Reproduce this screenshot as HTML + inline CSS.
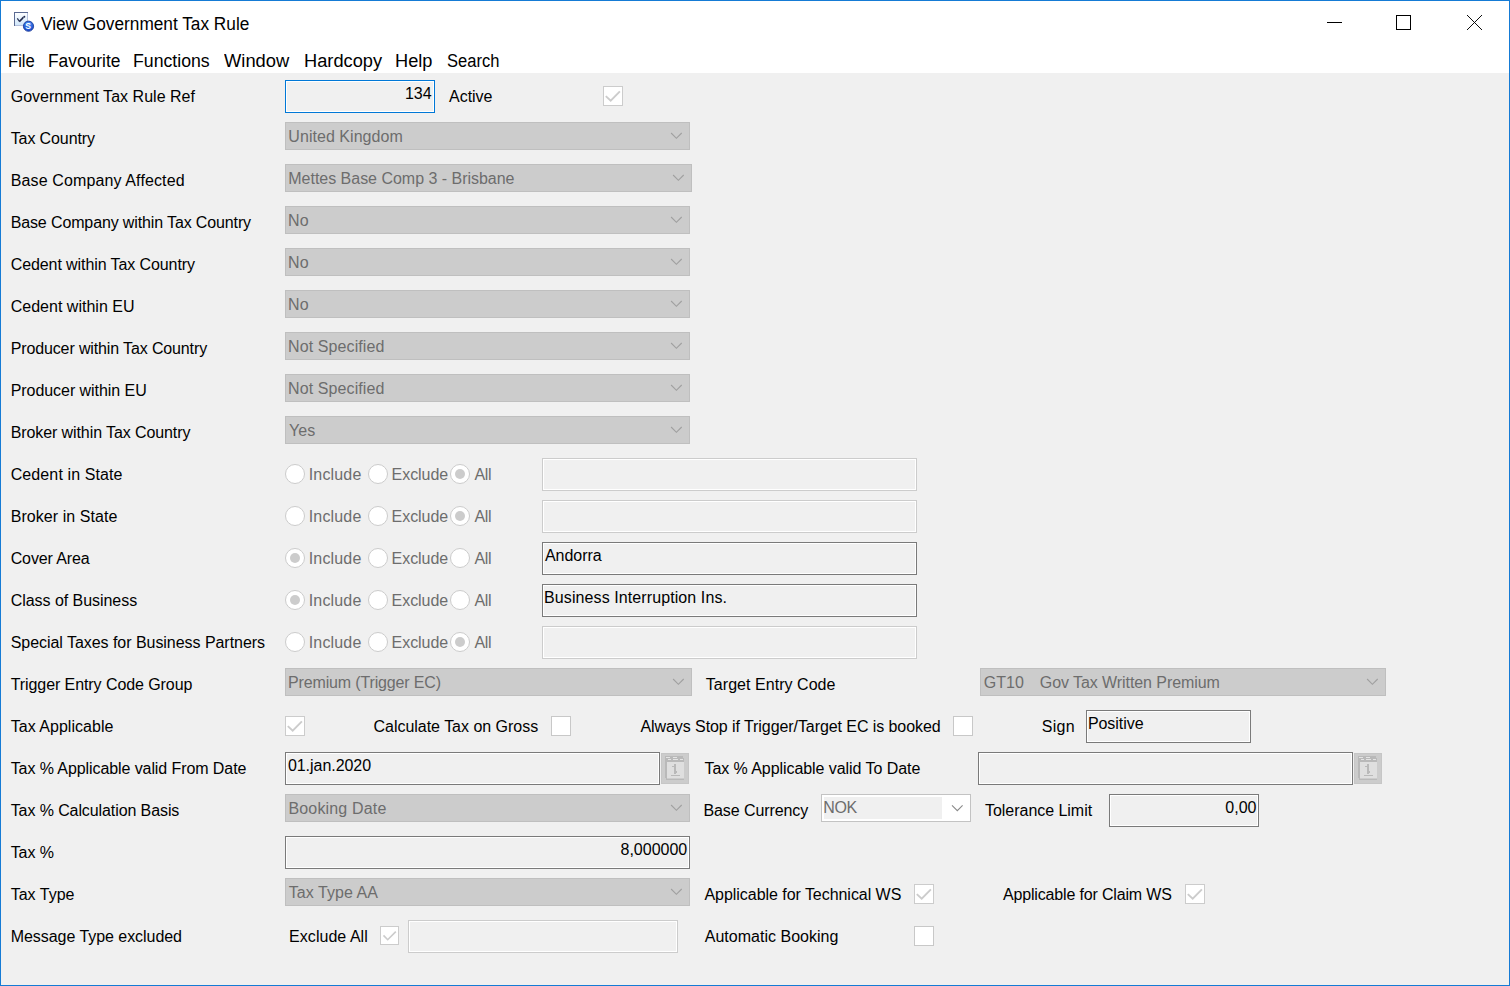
<!DOCTYPE html>
<html><head><meta charset="utf-8"><title>View Government Tax Rule</title>
<style>
*{box-sizing:border-box;margin:0;padding:0}
html,body{width:1510px;height:986px;overflow:hidden;background:#f0f0f0}
body{font-family:"Liberation Sans",sans-serif;font-size:16px;color:#000;position:relative}
.win{position:absolute;left:0;top:0;width:1510px;height:986px;border:1px solid #157bd5;background:#f0f0f0}
.tb{position:absolute;left:1px;top:1px;width:1508px;height:72px;background:#fff}
.t{position:absolute;white-space:nowrap;line-height:20px;height:20px}
.ttl{font-size:18px}
.mn{font-size:18px}
.g{color:#6d6d6d}
.dd{position:absolute;height:28px;background:#ccc;border:1px solid #bfbfbf}
.tx{position:absolute;height:33px;background:#f0f0f0;border:1px solid #7a7a7a;box-shadow:inset 0 0 0 1px #fff}
.tx.dis{border-color:#ccc}
.tx.foc{border-color:#0078d7}
.cb{position:absolute;width:20px;height:20px;background:#fff;border:1px solid #ccc}
.cb.en{border-color:#c8c8c8}
.rd{position:absolute;width:20px;height:20px;border-radius:50%;background:#fff;border:1px solid #ccc}
.rd.on::after{content:"";position:absolute;left:4px;top:4px;width:10px;height:10px;border-radius:50%;background:#ccc}
.cal{position:absolute;width:28px;height:31px;background:#ccc;border:1px solid #c6c6c6}
svg{position:absolute;overflow:visible}
</style></head>
<body>
<div class="win"></div><div class="tb"></div>
<svg style="left:14px;top:12px" width="22" height="22" viewBox="0 0 22 22">
<defs><linearGradient id="ig" x1="0" y1="0" x2="0" y2="1"><stop offset="0" stop-color="#ffffff"/><stop offset="1" stop-color="#cfe6fa"/></linearGradient>
<radialGradient id="sg" cx="0.5" cy="0.3" r="0.8"><stop offset="0" stop-color="#4a98f8"/><stop offset="1" stop-color="#0c36c0"/></radialGradient></defs>
<rect x="0.5" y="0.5" width="13" height="13" fill="url(#ig)" stroke="#5a6a92" stroke-width="1"/>
<path d="M13.5 1 V13.5 H1" fill="none" stroke="#b4c0dc" stroke-width="1"/>
<path d="M3.3 6.3 L5.5 9.5" fill="none" stroke="#222b4e" stroke-width="1.2"/>
<path d="M5.3 9.6 L8.2 6.6 L9.4 5.2" fill="none" stroke="#222b4e" stroke-width="1.6"/>
<circle cx="10.3" cy="4.7" r="1.0" fill="#222b4e"/>
<circle cx="14.5" cy="14.2" r="5.1" fill="url(#sg)" stroke="#23409a" stroke-width="0.9"/>
<text x="14.0" y="16.5" font-family="Liberation Sans, sans-serif" font-size="8.6" font-weight="bold" fill="#fff" text-anchor="middle">S</text>
</svg>
<div class="t ttl" style="top:14.36px;transform:scaleX(0.9581);transform-origin:0 0;left:41.22px;">View Government Tax Rule</div>
<div style="position:absolute;left:1327px;top:22px;width:15px;height:1px;background:#000"></div>
<div style="position:absolute;left:1396px;top:15px;width:15px;height:15px;border:1px solid #000"></div>
<svg style="left:1467px;top:15px" width="15" height="15"><path d="M0 0 L15 15 M15 0 L0 15" stroke="#000" stroke-width="0.95" fill="none"/></svg>
<div class="t mn" style="top:51.06px;transform:scaleX(0.9237);transform-origin:0 0;left:7.64px;">File</div>
<div class="t mn" style="top:51.06px;transform:scaleX(0.9647);transform-origin:0 0;left:47.68px;">Favourite</div>
<div class="t mn" style="top:51.06px;transform:scaleX(0.9826);transform-origin:0 0;left:133.35px;">Functions</div>
<div class="t mn" style="top:51.06px;transform:scaleX(1.0188);transform-origin:0 0;left:224.22px;">Window</div>
<div class="t mn" style="top:51.06px;transform:scaleX(1.0128);transform-origin:0 0;left:303.50px;">Hardcopy</div>
<div class="t mn" style="top:51.06px;transform:scaleX(1.0115);transform-origin:0 0;left:395.31px;">Help</div>
<div class="t mn" style="top:51.06px;transform:scaleX(0.9190);transform-origin:0 0;left:446.75px;">Search</div>
<div class="t " style="top:87.45px;left:10.70px;letter-spacing:0.022px;">Government Tax Rule Ref</div>
<div class="t " style="top:129.45px;left:10.70px;letter-spacing:-0.104px;">Tax Country</div>
<div class="t " style="top:171.45px;left:10.70px;letter-spacing:0.128px;">Base Company Affected</div>
<div class="t " style="top:213.45px;left:10.70px;letter-spacing:-0.128px;">Base Company within Tax Country</div>
<div class="t " style="top:255.45px;left:10.70px;letter-spacing:-0.089px;">Cedent within Tax Country</div>
<div class="t " style="top:297.45px;left:10.70px;letter-spacing:0.014px;">Cedent within EU</div>
<div class="t " style="top:339.45px;left:10.70px;letter-spacing:-0.129px;">Producer within Tax Country</div>
<div class="t " style="top:381.45px;left:10.70px;letter-spacing:-0.054px;">Producer within EU</div>
<div class="t " style="top:423.45px;left:10.70px;letter-spacing:-0.095px;">Broker within Tax Country</div>
<div class="t " style="top:465.45px;left:10.70px;letter-spacing:0.108px;">Cedent in State</div>
<div class="t " style="top:507.45px;left:10.70px;letter-spacing:0.07px;">Broker in State</div>
<div class="t " style="top:549.45px;left:10.70px;letter-spacing:-0.127px;">Cover Area</div>
<div class="t " style="top:591.45px;left:10.70px;letter-spacing:-0.043px;">Class of Business</div>
<div class="t " style="top:633.45px;left:10.70px;letter-spacing:-0.043px;">Special Taxes for Business Partners</div>
<div class="t " style="top:675.45px;left:10.70px;letter-spacing:-0.079px;">Trigger Entry Code Group</div>
<div class="t " style="top:717.45px;left:10.70px;letter-spacing:0.032px;">Tax Applicable</div>
<div class="t " style="top:759.45px;left:10.70px;letter-spacing:-0.084px;">Tax % Applicable valid From Date</div>
<div class="t " style="top:801.45px;left:10.70px;letter-spacing:-0.094px;">Tax % Calculation Basis</div>
<div class="t " style="top:843.45px;left:10.70px;letter-spacing:-0.077px;">Tax %</div>
<div class="t " style="top:885.45px;left:10.70px;letter-spacing:0.009px;">Tax Type</div>
<div class="t " style="top:927.45px;left:10.70px;letter-spacing:-0.047px;">Message Type excluded</div>
<div class="tx foc" style="left:285px;top:80px;width:150px"></div>
<div class="t " style="top:84.45px;right:1078.43px;">134</div>
<div class="t " style="top:87.45px;left:448.97px;letter-spacing:-0.007px;">Active</div>
<div class="cb" style="left:603px;top:86px;width:20px;height:20px"></div>
<svg style="left:0;top:0" width="1" height="1"><path d="M605.8 96.1 L610.7 100.7 L619.9 91.4" fill="none" stroke="#ccc" stroke-width="1.9"/></svg>
<div class="dd" style="left:285px;top:122px;width:405px"></div>
<div class="t g" style="top:127.45px;left:288.37px;letter-spacing:0.042px;">United Kingdom</div>
<svg style="left:0;top:0" width="1" height="1"><path d="M671.1 133.0 L676.4 138.3 L681.7 133.0" fill="none" stroke="#a0a0a0" stroke-width="1.1"/></svg>
<div class="dd" style="left:285px;top:164px;width:407px"></div>
<div class="t g" style="top:169.45px;left:288.29px;letter-spacing:-0.019px;">Mettes Base Comp 3 - Brisbane</div>
<svg style="left:0;top:0" width="1" height="1"><path d="M673.1 175.0 L678.4 180.3 L683.7 175.0" fill="none" stroke="#a0a0a0" stroke-width="1.1"/></svg>
<div class="dd" style="left:285px;top:206px;width:405px"></div>
<div class="t g" style="top:211.45px;left:288.09px;">No</div>
<svg style="left:0;top:0" width="1" height="1"><path d="M671.1 217.0 L676.4 222.3 L681.7 217.0" fill="none" stroke="#a0a0a0" stroke-width="1.1"/></svg>
<div class="dd" style="left:285px;top:248px;width:405px"></div>
<div class="t g" style="top:253.45px;left:288.09px;">No</div>
<svg style="left:0;top:0" width="1" height="1"><path d="M671.1 259.0 L676.4 264.3 L681.7 259.0" fill="none" stroke="#a0a0a0" stroke-width="1.1"/></svg>
<div class="dd" style="left:285px;top:290px;width:405px"></div>
<div class="t g" style="top:295.45px;left:288.09px;">No</div>
<svg style="left:0;top:0" width="1" height="1"><path d="M671.1 301.0 L676.4 306.3 L681.7 301.0" fill="none" stroke="#a0a0a0" stroke-width="1.1"/></svg>
<div class="dd" style="left:285px;top:332px;width:405px"></div>
<div class="t g" style="top:337.45px;left:288.09px;letter-spacing:0.098px;">Not Specified</div>
<svg style="left:0;top:0" width="1" height="1"><path d="M671.1 343.0 L676.4 348.3 L681.7 343.0" fill="none" stroke="#a0a0a0" stroke-width="1.1"/></svg>
<div class="dd" style="left:285px;top:374px;width:405px"></div>
<div class="t g" style="top:379.45px;left:288.09px;letter-spacing:0.098px;">Not Specified</div>
<svg style="left:0;top:0" width="1" height="1"><path d="M671.1 385.0 L676.4 390.3 L681.7 385.0" fill="none" stroke="#a0a0a0" stroke-width="1.1"/></svg>
<div class="dd" style="left:285px;top:416px;width:405px"></div>
<div class="t g" style="top:421.45px;left:289.05px;">Yes</div>
<svg style="left:0;top:0" width="1" height="1"><path d="M671.1 427.0 L676.4 432.3 L681.7 427.0" fill="none" stroke="#a0a0a0" stroke-width="1.1"/></svg>
<div class="dd" style="left:285px;top:668px;width:407px"></div>
<div class="t g" style="top:673.45px;left:288.09px;letter-spacing:-0.156px;">Premium (Trigger EC)</div>
<svg style="left:0;top:0" width="1" height="1"><path d="M673.1 679.0 L678.4 684.3 L683.7 679.0" fill="none" stroke="#a0a0a0" stroke-width="1.1"/></svg>
<div class="dd" style="left:285px;top:794px;width:405px"></div>
<div class="t g" style="top:799.45px;left:288.39px;letter-spacing:0.178px;">Booking Date</div>
<svg style="left:0;top:0" width="1" height="1"><path d="M671.1 805.0 L676.4 810.3 L681.7 805.0" fill="none" stroke="#a0a0a0" stroke-width="1.1"/></svg>
<div class="dd" style="left:285px;top:878px;width:405px"></div>
<div class="t g" style="top:883.45px;left:288.84px;letter-spacing:0.033px;">Tax Type AA</div>
<svg style="left:0;top:0" width="1" height="1"><path d="M671.1 889.0 L676.4 894.3 L681.7 889.0" fill="none" stroke="#a0a0a0" stroke-width="1.1"/></svg>
<div class="rd" style="left:285px;top:464px"></div>
<div class="t g" style="top:465.45px;left:308.72px;letter-spacing:0.166px;">Include</div>
<div class="rd" style="left:368px;top:464px"></div>
<div class="t g" style="top:465.45px;left:391.59px;letter-spacing:-0.05px;">Exclude</div>
<div class="rd on" style="left:450px;top:464px"></div>
<div class="t g" style="top:465.45px;left:474.47px;letter-spacing:-0.34px;">All</div>
<div class="tx dis" style="left:542px;top:458px;width:375px"></div>
<div class="rd" style="left:285px;top:506px"></div>
<div class="t g" style="top:507.45px;left:308.72px;letter-spacing:0.166px;">Include</div>
<div class="rd" style="left:368px;top:506px"></div>
<div class="t g" style="top:507.45px;left:391.59px;letter-spacing:-0.05px;">Exclude</div>
<div class="rd on" style="left:450px;top:506px"></div>
<div class="t g" style="top:507.45px;left:474.47px;letter-spacing:-0.34px;">All</div>
<div class="tx dis" style="left:542px;top:500px;width:375px"></div>
<div class="rd on" style="left:285px;top:548px"></div>
<div class="t g" style="top:549.45px;left:308.72px;letter-spacing:0.166px;">Include</div>
<div class="rd" style="left:368px;top:548px"></div>
<div class="t g" style="top:549.45px;left:391.59px;letter-spacing:-0.05px;">Exclude</div>
<div class="rd" style="left:450px;top:548px"></div>
<div class="t g" style="top:549.45px;left:474.47px;letter-spacing:-0.34px;">All</div>
<div class="tx " style="left:542px;top:542px;width:375px"></div>
<div class="t " style="top:546.45px;left:544.97px;letter-spacing:-0.048px;">Andorra</div>
<div class="rd on" style="left:285px;top:590px"></div>
<div class="t g" style="top:591.45px;left:308.72px;letter-spacing:0.166px;">Include</div>
<div class="rd" style="left:368px;top:590px"></div>
<div class="t g" style="top:591.45px;left:391.59px;letter-spacing:-0.05px;">Exclude</div>
<div class="rd" style="left:450px;top:590px"></div>
<div class="t g" style="top:591.45px;left:474.47px;letter-spacing:-0.34px;">All</div>
<div class="tx " style="left:542px;top:584px;width:375px"></div>
<div class="t " style="top:588.45px;left:544.09px;letter-spacing:0.093px;">Business Interruption Ins.</div>
<div class="rd" style="left:285px;top:632px"></div>
<div class="t g" style="top:633.45px;left:308.72px;letter-spacing:0.166px;">Include</div>
<div class="rd" style="left:368px;top:632px"></div>
<div class="t g" style="top:633.45px;left:391.59px;letter-spacing:-0.05px;">Exclude</div>
<div class="rd on" style="left:450px;top:632px"></div>
<div class="t g" style="top:633.45px;left:474.47px;letter-spacing:-0.34px;">All</div>
<div class="tx dis" style="left:542px;top:626px;width:375px"></div>
<div class="t " style="top:675.45px;left:705.84px;letter-spacing:0.039px;">Target Entry Code</div>
<div class="dd" style="left:980px;top:668px;width:406px"></div>
<div class="t g" style="top:673.45px;left:983.70px;letter-spacing:0.071px;">GT10</div>
<div class="t g" style="top:673.45px;left:1039.80px;letter-spacing:-0.074px;">Gov Tax Written Premium</div>
<svg style="left:0;top:0" width="1" height="1"><path d="M1367.1 679.0 L1372.4 684.3 L1377.7 679.0" fill="none" stroke="#a0a0a0" stroke-width="1.1"/></svg>
<div class="cb" style="left:285px;top:716px;width:20px;height:20px"></div>
<svg style="left:0;top:0" width="1" height="1"><path d="M287.8 726.1 L292.7 730.7 L301.9 721.4" fill="none" stroke="#ccc" stroke-width="1.9"/></svg>
<div class="t " style="top:717.45px;left:373.49px;letter-spacing:-0.021px;">Calculate Tax on Gross</div>
<div class="cb en" style="left:551px;top:716px;width:20px;height:20px"></div>
<div class="t " style="top:717.45px;left:640.47px;letter-spacing:-0.075px;">Always Stop if Trigger/Target EC is booked</div>
<div class="cb en" style="left:953px;top:716px;width:20px;height:20px"></div>
<div class="t " style="top:717.45px;left:1041.87px;letter-spacing:0.245px;">Sign</div>
<div class="tx " style="left:1086px;top:710px;width:165px"></div>
<div class="t " style="top:714.45px;left:1087.89px;letter-spacing:-0.044px;">Positive</div>
<div class="tx " style="left:285px;top:752px;width:375px"></div>
<div class="t " style="top:756.45px;left:287.88px;letter-spacing:-0.039px;">01.jan.2020</div>
<div class="cal" style="left:661px;top:753px"></div>
<svg style="left:665px;top:756px" width="19" height="24" viewBox="0 0 19 24"><rect x="0" y="0" width="18" height="6" fill="#b9b9b9"/><rect x="0" y="5" width="2" height="17" fill="#b9b9b9"/><rect x="1" y="22" width="18" height="2" fill="#b9b9b9"/><rect x="2" y="6" width="17" height="16.5" fill="#dfdfdf"/><rect x="18" y="2" width="1" height="4" fill="#b9b9b9"/><rect x="1" y="1" width="4" height="1" fill="#e4e4e4"/><rect x="8" y="1" width="4" height="1" fill="#e4e4e4"/><rect x="3" y="3" width="3" height="1" fill="#e4e4e4"/><rect x="8" y="3" width="5" height="1" fill="#e4e4e4"/><rect x="15" y="3" width="3" height="1" fill="#e4e4e4"/><rect x="9" y="8" width="2" height="10" fill="#b9b9b9"/><rect x="7" y="10" width="2" height="1" fill="#b9b9b9"/><rect x="11" y="15" width="1" height="2" fill="#b9b9b9"/><rect x="6" y="19" width="9" height="1" fill="#b9b9b9"/></svg>
<div class="t " style="top:759.45px;left:704.44px;letter-spacing:-0.06px;">Tax % Applicable valid To Date</div>
<div class="tx " style="left:978px;top:752px;width:375px"></div>
<div class="cal" style="left:1354px;top:753px"></div>
<svg style="left:1358px;top:756px" width="19" height="24" viewBox="0 0 19 24"><rect x="0" y="0" width="18" height="6" fill="#b9b9b9"/><rect x="0" y="5" width="2" height="17" fill="#b9b9b9"/><rect x="1" y="22" width="18" height="2" fill="#b9b9b9"/><rect x="2" y="6" width="17" height="16.5" fill="#dfdfdf"/><rect x="18" y="2" width="1" height="4" fill="#b9b9b9"/><rect x="1" y="1" width="4" height="1" fill="#e4e4e4"/><rect x="8" y="1" width="4" height="1" fill="#e4e4e4"/><rect x="3" y="3" width="3" height="1" fill="#e4e4e4"/><rect x="8" y="3" width="5" height="1" fill="#e4e4e4"/><rect x="15" y="3" width="3" height="1" fill="#e4e4e4"/><rect x="9" y="8" width="2" height="10" fill="#b9b9b9"/><rect x="7" y="10" width="2" height="1" fill="#b9b9b9"/><rect x="11" y="15" width="1" height="2" fill="#b9b9b9"/><rect x="6" y="19" width="9" height="1" fill="#b9b9b9"/></svg>
<div class="t " style="top:801.45px;left:703.49px;letter-spacing:-0.09px;">Base Currency</div>
<div style="position:absolute;left:821px;top:794px;width:150px;height:28px;background:#fff;border:1px solid #c3c3c3"></div>
<div style="position:absolute;left:824px;top:797px;width:118px;height:22px;background:#f0f0f0"></div>
<div class="t g" style="top:798.45px;left:823.29px;letter-spacing:-0.34px;">NOK</div>
<svg style="left:0;top:0" width="1" height="1"><path d="M952.0 805.4 L957.3 810.7 L962.6 805.4" fill="none" stroke="#8a8a8a" stroke-width="1.1"/></svg>
<div class="t " style="top:801.45px;left:985.04px;letter-spacing:-0.038px;">Tolerance Limit</div>
<div class="tx " style="left:1109px;top:794px;width:150px"></div>
<div class="t " style="top:798.45px;right:253.58px;">0,00</div>
<div class="tx " style="left:285px;top:836px;width:405px"></div>
<div class="t " style="top:840.45px;right:822.77px;">8,000000</div>
<div class="t " style="top:885.45px;left:704.47px;letter-spacing:-0.045px;">Applicable for Technical WS</div>
<div class="cb" style="left:914px;top:884px;width:20px;height:20px"></div>
<svg style="left:0;top:0" width="1" height="1"><path d="M916.8 894.1 L921.7 898.7 L930.9 889.4" fill="none" stroke="#ccc" stroke-width="1.9"/></svg>
<div class="t " style="top:885.45px;left:1002.97px;letter-spacing:-0.161px;">Applicable for Claim WS</div>
<div class="cb" style="left:1185px;top:884px;width:20px;height:20px"></div>
<svg style="left:0;top:0" width="1" height="1"><path d="M1187.8 894.1 L1192.7 898.7 L1201.9 889.4" fill="none" stroke="#ccc" stroke-width="1.9"/></svg>
<div class="t " style="top:927.45px;left:289.09px;letter-spacing:0.042px;">Exclude All</div>
<div class="cb" style="left:380px;top:926px;width:19px;height:19px"></div>
<svg style="left:0;top:0" width="1" height="1"><path d="M383.5 935.4 L387.7 939.7 L395.8 931.6" fill="none" stroke="#ccc" stroke-width="1.6"/></svg>
<div class="tx dis" style="left:408px;top:920px;width:270px"></div>
<div class="t " style="top:927.45px;left:704.77px;letter-spacing:0.016px;">Automatic Booking</div>
<div class="cb en" style="left:914px;top:926px;width:20px;height:20px"></div>
</body></html>
